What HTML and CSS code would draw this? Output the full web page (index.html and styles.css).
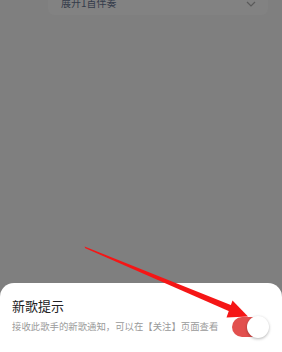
FILE: index.html
```html
<!DOCTYPE html>
<html lang="zh">
<head>
<meta charset="utf-8">
<link rel="stylesheet" href="styles.css">
</head>
<body>
<div class="screen">
  <div class="card">
    <span class="card-text">展开1首伴奏</span>
    <svg class="chev" width="10" height="6" viewBox="0 0 10 6"><path d="M1 1 L5 5 L9 1" fill="none" stroke="#5a5a5a" stroke-width="1.2"/></svg>
  </div>
  <div class="sheet">
    <div class="texts">
      <div class="title">新歌提示</div>
      <div class="sub">接收此歌手的新歌通知，可以在【关注】页面查看</div>
    </div>
    <div class="toggle"><div class="knob"></div></div>
  </div>
  <svg class="arrow" width="282" height="352" viewBox="0 0 282 352">
    <polygon points="84.5,246.5 85.4,248.2 232,312.5 234.5,306.5" fill="#f51616"/>
    <polygon points="248,316.5 232.5,300.5 226.5,317.5" fill="#f51616"/>
  </svg>
</div>
</body>
</html>
```
FILE: styles.css
```css
* { box-sizing: border-box; }
html, body { margin: 0; padding: 0; }
body {
  background: #7f7f7f;
  font-family: "Noto Sans CJK SC", "Noto Sans", sans-serif;
}
.screen {
  position: relative;
  width: 282px;
  height: 352px;
  display: flex;
  flex-direction: column;
  overflow: hidden;
}
.card {
  margin-left: 48px;
  width: 220px;
  height: 15px;
  background: #828282;
  border-radius: 0 0 6px 6px;
  display: flex;
  align-items: flex-start;
  justify-content: space-between;
  padding: 0 12px 0 13px;
}
.card-text {
  font-size: 10px;
  line-height: 10px;
  margin-top: -2px;
  color: #343b4a;
}
.chev { margin-top: 1px; }
.sheet {
  margin-top: auto;
  height: 69px;
  background: #fff;
  border-radius: 14px 14px 0 0;
  display: flex;
  align-items: flex-start;
  justify-content: space-between;
  padding: 15px 14px 0 12px;
}
.title {
  font-size: 13px;
  line-height: 16px;
  color: #222;
}
.sub {
  margin-top: 6px;
  font-size: 9.4px;
  line-height: 12px;
  color: #9a9a9a;
}
.toggle {
  margin-top: 19px;
  width: 36px;
  height: 20px;
  border-radius: 10px;
  background: #e2504e;
  position: relative;
}
.knob {
  position: absolute;
  right: -1px;
  top: -1px;
  width: 22px;
  height: 22px;
  border-radius: 50%;
  background: #fff;
  box-shadow: 0 1px 3px rgba(0,0,0,0.3);
}
.arrow {
  position: absolute;
  left: 0;
  top: 0;
  pointer-events: none;
}
```
